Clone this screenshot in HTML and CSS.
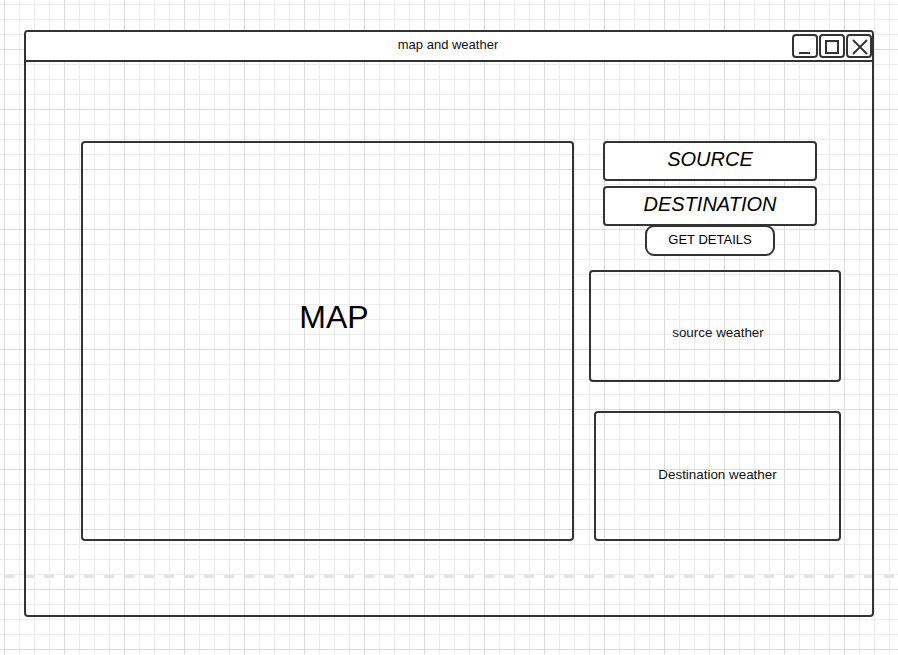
FILE: index.html
```html
<!DOCTYPE html>
<html lang="en">
<head>
    <meta charset="UTF-8">
    <meta name="viewport" content="width=device-width, initial-scale=1.0">
    <title>map and weather</title>
    <link rel="stylesheet" href="styles.css">
</head>
<body>
    <div class="window">
        <div class="title-bar">
            <span></span>
            <div class="title">map and weather</div>
            <div class="controls">
                <div class="ctrl-btn">
                    <svg width="22" height="20" viewBox="0 0 22 20"><line x1="5" y1="17" x2="16" y2="17" stroke="#333" stroke-width="2"/></svg>
                </div>
                <div class="ctrl-btn">
                    <svg width="22" height="20" viewBox="0 0 22 20"><rect x="5" y="5" width="12" height="12" fill="none" stroke="#333" stroke-width="2"/></svg>
                </div>
                <div class="ctrl-btn">
                    <svg width="22" height="20" viewBox="0 0 22 20"><path d="M5 4 L19 18 M19 4 L5 18" stroke="#333" stroke-width="1.8" fill="none"/></svg>
                </div>
            </div>
        </div>
        <div class="window-body">
            <div class="map-box">MAP</div>
            <div class="side">
                <div class="input-box source">SOURCE</div>
                <div class="input-box destination">DESTINATION</div>
                <button class="details-btn">GET DETAILS</button>
                <div class="weather-box source-weather">source weather</div>
                <div class="weather-box dest-weather">Destination weather</div>
            </div>
        </div>
    </div>
</body>
</html>
```

FILE: styles.css
```css
body {
    margin: 0;
    min-height: 655px;
    font-family: "Liberation Sans", Arial, sans-serif;
    color: #111;
    background-color: white;
    background-image:
        linear-gradient(to right, #e2e2e2 10px, transparent 10px),
        linear-gradient(to right, #dcdcdc 1px, transparent 1px),
        linear-gradient(to bottom, #dcdcdc 1px, transparent 1px),
        linear-gradient(to right, #ececec 1px, transparent 1px),
        linear-gradient(to bottom, #ececec 1px, transparent 1px);
    background-size: 20px 3px, 60px 60px, 60px 60px, 15px 15px, 15px 15px;
    background-position: 4px 575px, 4px 0, 0 49px, 4px 0, 0 4px;
    background-repeat: repeat-x, repeat, repeat, repeat, repeat;
}
.window {
    box-sizing: border-box;
    width: 850px;
    height: 587px;
    margin: 30px 0 0 24px;
    border: 2px solid #333;
    border-radius: 4px;
    display: flex;
    flex-direction: column;
}
.title-bar {
    height: 28px;
    border-bottom: 2px solid #333;
    background-color: white;
    border-radius: 2px 2px 0 0;
    display: grid;
    grid-template-columns: 1fr auto 1fr;
    align-items: center;
}
.title {
    font-size: 13px;
    color: #111;
    margin-right: 2px;
    padding-bottom: 4px;
}
.controls {
    justify-self: end;
    align-self: start;
    display: flex;
    gap: 1px;
    margin-top: 2px;
}
.ctrl-btn {
    box-sizing: border-box;
    width: 26px;
    height: 24px;
    border: 2px solid #333;
    border-radius: 4px;
    background-color: white;
}
.ctrl-btn svg {
    display: block;
}
.window-body {
    display: flex;
    align-items: flex-start;
    gap: 15px;
    padding: 79px 0 0 55px;
}
.map-box {
    box-sizing: border-box;
    width: 493px;
    height: 400px;
    border: 2px solid #333;
    border-radius: 4px;
    display: flex;
    align-items: center;
    justify-content: center;
    padding: 0 0 48px 13px;
    font-size: 32px;
    color: #000;
}
.side {
    width: 252px;
    display: flex;
    flex-direction: column;
    align-items: flex-start;
}
.input-box {
    box-sizing: border-box;
    width: 214px;
    height: 40px;
    margin-left: 14px;
    border: 2px solid #333;
    border-radius: 4px;
    background-color: white;
    display: flex;
    align-items: center;
    justify-content: center;
    font-size: 20px;
    font-style: italic;
    color: #000;
    padding-bottom: 4px;
}
.destination {
    margin-top: 5px;
}
.details-btn {
    box-sizing: border-box;
    width: 130px;
    height: 31px;
    margin: -1px 0 0 56px;
    border: 2px solid #333;
    border-radius: 9px;
    background-color: white;
    font-family: "Liberation Sans", Arial, sans-serif;
    font-size: 13px;
    color: #000;
    padding: 0 0 2px 0;
}
.weather-box {
    box-sizing: border-box;
    border: 2px solid #333;
    border-radius: 4px;
    display: flex;
    align-items: center;
    justify-content: center;
    font-size: 13.4px;
    color: #111;
}
.source-weather {
    width: 252px;
    height: 112px;
    margin-top: 14px;
    padding: 12px 0 0 6px;
}
.dest-weather {
    width: 247px;
    height: 130px;
    margin: 29px 0 0 5px;
    padding-bottom: 4px;
}
```
